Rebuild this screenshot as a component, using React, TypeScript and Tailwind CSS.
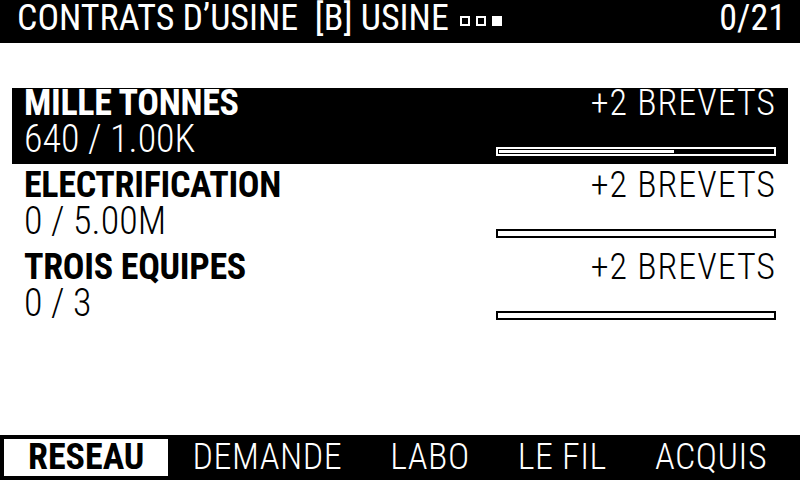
import React from "react";

type Contract = { title: string; value: string; progress: number; reward: string };

const contracts: Contract[] = [
  { title: "MILLE TONNES", value: "640 / 1.00K", progress: 0.64, reward: "+2 BREVETS" },
  { title: "ELECTRIFICATION", value: "0 / 5.00M", progress: 0, reward: "+2 BREVETS" },
  { title: "TROIS EQUIPES", value: "0 / 3", progress: 0, reward: "+2 BREVETS" },
];

const tabs = ["RESEAU", "DEMANDE", "LABO", "LE FIL", "ACQUIS"];

function Row({ c, selected }: { c: Contract; selected: boolean }) {
  return (
    <div
      className={
        "flex h-[76px] flex-col px-3 " +
        (selected ? "bg-black text-white" : "bg-white text-black")
      }
    >
      <div className="flex h-[30px] items-start justify-between">
        <span className="text-[36px] leading-[30px] font-bold tracking-[-0.3px]">{c.title}</span>
        <span className="text-[36px] leading-[30px] font-light tracking-[1px]">{c.reward}</span>
      </div>
      <div className="mt-[2px] flex items-start justify-between">
        <span className="text-[38px] leading-[38px] font-light">{c.value}</span>
        <div
          className={
            "mt-[27px] h-[9px] w-[280px] border-2 p-[1px] " +
            (selected ? "border-white" : "border-black")
          }
        >
          <div
            className={"h-full " + (selected ? "bg-white" : "bg-black")}
            style={{ width: `${c.progress * 100}%` }}
          />
        </div>
      </div>
    </div>
  );
}

export default function App() {
  return (
    <div className="flex h-[480px] w-[800px] flex-col overflow-hidden bg-white font-['Roboto_Condensed',sans-serif]">
      <header className="flex h-[43px] shrink-0 items-start justify-between bg-black pl-[17px] pr-[14px] text-white">
        <div className="flex items-start">
          <span className="text-[36px] leading-[36px] font-normal whitespace-pre">
            {"CONTRATS D\u2019USINE  [B] USINE"}
          </span>
          <div className="ml-[11px] mt-[16px] flex gap-[6px]">
            <div className="h-[10px] w-[10px] border-2 border-white" />
            <div className="h-[10px] w-[10px] border-2 border-white" />
            <div className="h-[10px] w-[10px] bg-white" />
          </div>
        </div>
        <span className="text-[36px] leading-[36px] font-normal">0/21</span>
      </header>

      <main className="flex flex-1 flex-col gap-[6px] px-3 pt-[45px]">
        {contracts.map((c, i) => (
          <Row key={c.title} c={c} selected={i === 0} />
        ))}
      </main>

      <footer className="flex h-[45px] shrink-0 items-center justify-between bg-black pl-[4px] pr-[9px]">
        {tabs.map((t, i) => (
          <div
            key={t}
            className={
              "h-[37px] px-6 text-[36px] leading-[37px] " +
              (i === 0 ? "bg-white font-bold text-black" : "font-light tracking-[0.5px] text-white")
            }
          >
            {t}
          </div>
        ))}
      </footer>
    </div>
  );
}
